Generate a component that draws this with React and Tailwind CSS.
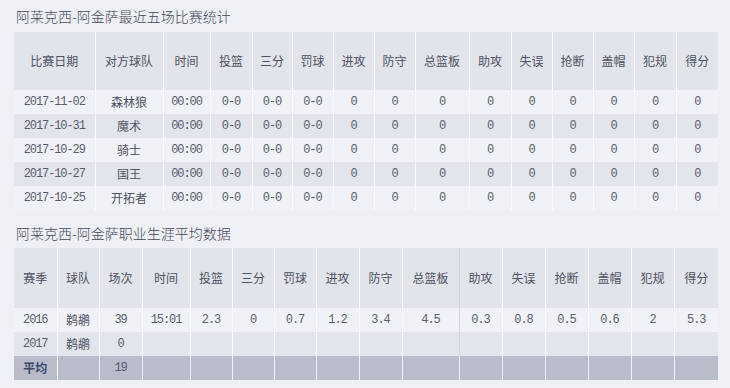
import React from 'react';

const cn = '"Microsoft YaHei", "Noto Sans CJK SC", sans-serif';
const mono = '"Liberation Mono", "Noto Sans CJK SC", monospace';

const recentCols = [81, 68, 47, 42, 40, 41, 41, 41, 54, 42, 41, 41, 41, 42, 42];
const recentHead = ['比赛日期', '对方球队', '时间', '投篮', '三分', '罚球', '进攻', '防守', '总篮板', '助攻', '失误', '抢断', '盖帽', '犯规', '得分'];
const recentRows = [
    ['2017-11-02', '森林狼'],
    ['2017-10-31', '魔术'],
    ['2017-10-29', '骑士'],
    ['2017-10-27', '国王'],
    ['2017-10-25', '开拓者'],
];

const careerCols = [43, 42, 43, 48, 42, 42, 42, 43, 43, 57, 43, 43, 43, 43, 43, 44];
const careerHead = ['赛季', '球队', '场次', '时间', '投篮', '三分', '罚球', '进攻', '防守', '总篮板', '助攻', '失误', '抢断', '盖帽', '犯规', '得分'];
const careerRows = [
    ['2016', '鹈鹕', '39', '15:01', '2.3', '0', '0.7', '1.2', '3.4', '4.5', '0.3', '0.8', '0.5', '0.6', '2', '5.3'],
    ['2017', '鹈鹕', '0', '', '', '', '', '', '', '', '', '', '', '', '', ''],
];

const isCjk = (s) => /[\u4e00-\u9fff]/.test(s);

// cjk cells use the sans family, numbers a thin fixed-width one
const Cell = ({ children, last, dark }) => {
    const zh = isCjk(children || '');
    return (
        <td
            className={`p-0 text-center ${zh ? 'text-[12px] text-[#4e5162]' : 'text-[12px] text-[#5a5d6d]'} ${last ? '' : dark ? 'border-r border-[#d0d3dc]' : 'border-r border-white/80'}`}
            style={{ fontFamily: zh ? cn : mono, letterSpacing: zh ? 0 : '-1.1px' }}
        >
            {children}
        </td>
    );
};

const Title = ({ children, className }) => (
    <div className={`pl-[16px] text-[14px] font-light text-[#45475a] ${className}`} style={{ fontFamily: cn }}>
        {children}
    </div>
);

const App = () => {
    return (
        <div className="w-[730px] h-[388px] bg-[#eff0f5] overflow-hidden">
            <Title className="h-[32px] pt-[6px] leading-[20px]">阿莱克西-阿金萨最近五场比赛统计</Title>

            <table className="ml-[14px] w-[704px] table-fixed border-collapse">
                <colgroup>
                    {recentCols.map((w, i) => <col key={i} style={{ width: w }} />)}
                </colgroup>
                <thead>
                    <tr className="h-[58px] bg-[#e2e4eb]">
                        {recentHead.map((h, i) => (
                            <th key={i} className={`p-0 font-normal text-[12px] text-[#4e5162] ${i < 14 ? 'border-r border-white' : ''}`} style={{ fontFamily: cn }}>
                                {h}
                            </th>
                        ))}
                    </tr>
                </thead>
                <tbody>
                    {recentRows.map((r, ri) => (
                        <tr key={ri} className={`h-[24px] ${ri % 2 === 0 ? 'bg-[#f1f2f7]' : 'bg-[#e3e5ec]'}`}>
                            <Cell>{r[0]}</Cell>
                            <Cell>{r[1]}</Cell>
                            <Cell>00:00</Cell>
                            <Cell>0-0</Cell>
                            <Cell>0-0</Cell>
                            <Cell>0-0</Cell>
                            {Array.from({ length: 9 }).map((_, i) => (
                                <Cell key={i} last={i === 8}>0</Cell>
                            ))}
                        </tr>
                    ))}
                </tbody>
            </table>

            <Title className="h-[38px] pt-[13px] leading-[20px]">阿莱克西-阿金萨职业生涯平均数据</Title>

            <table className="ml-[14px] w-[704px] table-fixed border-collapse">
                <colgroup>
                    {careerCols.map((w, i) => <col key={i} style={{ width: w }} />)}
                </colgroup>
                <thead>
                    <tr className="h-[60px] bg-[#e2e4eb]">
                        {careerHead.map((h, i) => (
                            <th key={i} className={`p-0 font-normal text-[12px] text-[#4e5162] ${i === 9 ? 'border-r border-[#d0d3dc]' : i < 15 ? 'border-r border-white' : ''}`} style={{ fontFamily: cn }}>
                                {h}
                            </th>
                        ))}
                    </tr>
                </thead>
                <tbody>
                    {careerRows.map((r, ri) => (
                        <tr key={ri} className={`h-[24px] ${ri % 2 === 0 ? 'bg-[#f1f2f7]' : 'bg-[#e3e5ec]'}`}>
                            {r.map((v, i) => (
                                <Cell key={i} last={i === 15} dark={i === 9}>{v}</Cell>
                            ))}
                        </tr>
                    ))}
                    <tr className="h-[24px] bg-[#b8bccb]">
                        <td className="p-0 text-center text-[12px] font-bold text-[#3b4767] border-r border-white" style={{ fontFamily: cn }}>平均</td>
                        <Cell></Cell>
                        <Cell>19</Cell>
                        {Array.from({ length: 13 }).map((_, i) => (
                            <Cell key={i} last={i === 12}></Cell>
                        ))}
                    </tr>
                </tbody>
            </table>
        </div>
    );
};

export default App;
